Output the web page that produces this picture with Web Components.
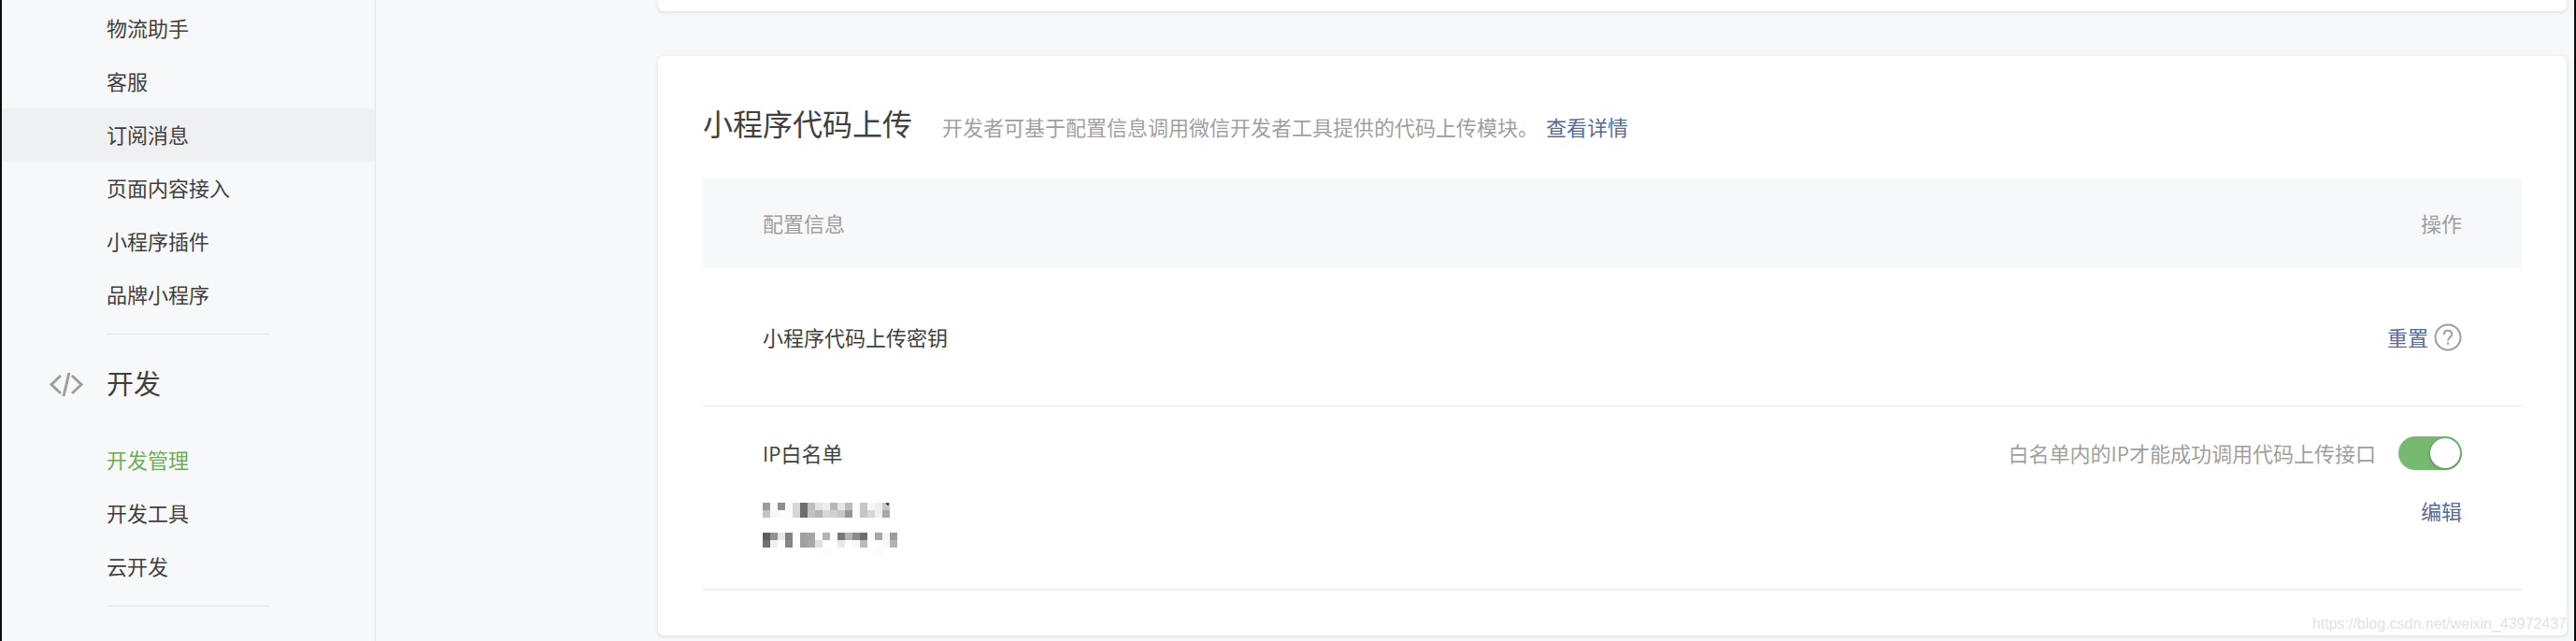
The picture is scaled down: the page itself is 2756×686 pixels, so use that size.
<!DOCTYPE html>
<html lang="zh-CN">
<head>
<meta charset="utf-8">
<meta name="viewport" content="width=device-width, initial-scale=1">
<title>开发管理</title>
<style>
  :root {
    --font: "Open Sans", "Noto Sans CJK SC", sans-serif;
    --bg: #f7f8fa;
    --text: #404040;
    --muted: #9f9f9f;
    --link: #576b95;
    --green: #6dad58;
    --line: #e4e5e7;
    --size: 22px;
  }

  body {
    margin: 0;
    background: var(--bg);
    color: var(--text);
    font-family: var(--font);
    font-size: var(--size);
    line-height: 36px;
  }
</style>
</head>
<body>

<console-shell>
  <side-nav slot="nav">
    <nav-group>
      <nav-item href="#logistics">物流助手</nav-item>
      <nav-item href="#service">客服</nav-item>
      <nav-item href="#subscribe" hovered>订阅消息</nav-item>
      <nav-item href="#content">页面内容接入</nav-item>
      <nav-item href="#plugin">小程序插件</nav-item>
      <nav-item href="#brand">品牌小程序</nav-item>
    </nav-group>
    <nav-group heading="开发">
      <nav-item href="#manage" current>开发管理</nav-item>
      <nav-item href="#tools">开发工具</nav-item>
      <nav-item href="#cloud">云开发</nav-item>
    </nav-group>
  </side-nav>

  <content-card tail></content-card>
  <content-card>
    <card-title slot="header">
      小程序代码上传
      <span slot="desc">开发者可基于配置信息调用微信开发者工具提供的代码上传模块。</span>
      <text-link slot="link" href="#detail">查看详情</text-link>
    </card-title>
    <upload-table></upload-table>
  </content-card>

  <water-mark slot="overlay">https://blog.csdn.net/weixin_43972437</water-mark>
</console-shell>

<script>
  const html = (markup) => {
    const template = document.createElement("template");
    template.innerHTML = markup;
    return template;
  };

  class BaseElement extends HTMLElement {
    constructor() {
      super();
      this.attachShadow({ mode: "open" });
      this.shadowRoot.append(this.constructor.template.content.cloneNode(true));
    }
  }

  class ConsoleShell extends BaseElement {
    static template = html(`
<style>
  :host {
    display: flex;
    box-sizing: border-box;
    min-height: 100vh;
    border: solid #0b0c0e;
    border-width: 0 2px;
  }

  main {
    flex: 1;
    min-width: 0;
    display: flex;
    flex-flow: column;
    gap: 48px;
    padding: 0 8px 6px 302px;
  }
</style>

<slot name="nav"></slot>
<main><slot></slot></main>
<slot name="overlay"></slot>
`);
  }

  class SideNav extends BaseElement {
    static template = html(`
<style>
  :host {
    display: block;
    flex: none;
    box-sizing: border-box;
    width: 400px;
    padding-top: 2px;
    border-right: 1px solid var(--line);
  }
</style>

<nav><slot></slot></nav>
`);
  }

  class NavGroup extends BaseElement {
    static template = html(`
<style>
  :host {
    display: block;
  }

  h2 {
    display: flex;
    align-items: center;
    height: 106px;
    margin: 0;
    padding-left: 50px;
    font-size: 29px;
    font-weight: 400;
  }

  h2[hidden] {
    display: none;
  }

  svg {
    width: 38px;
    height: 28px;
    margin-right: 24px;
    fill: none;
    stroke: var(--muted);
    stroke-width: 3;
  }

  hr {
    width: 175px;
    height: 1px;
    margin: 13px 0 0 112px;
    border: 0;
    background: var(--line);
  }
</style>

<h2 hidden>
  <svg viewBox="0 0 38 28" aria-hidden="true">
    <path d="M13 5 3 14.500l10 9.500M25 5l10 9.500L25 24M22 2l-6 25"/>
  </svg>
  <span></span>
</h2>
<slot></slot>
<hr>
`);

    connectedCallback() {
      const heading = this.getAttribute("heading");
      if (!heading) return;
      this.shadowRoot.querySelector("h2").hidden = false;
      this.shadowRoot.querySelector("h2 span").textContent = heading;
    }
  }

  class NavItem extends BaseElement {
    static template = html(`
<style>
  :host {
    display: block;
  }

  a {
    display: block;
    padding-left: 112px;
    line-height: 57px;
    color: inherit;
    text-decoration: none;
  }

  a:hover,
  :host([hovered]) a {
    background: #eff0f2;
  }

  :host([current]) a {
    color: var(--green);
  }
</style>

<a><slot></slot></a>
`);

    connectedCallback() {
      const a = this.shadowRoot.querySelector("a");
      a.href = this.getAttribute("href");
      if (this.hasAttribute("current")) a.setAttribute("aria-current", "page");
    }
  }

  class ContentCard extends BaseElement {
    static template = html(`
<style>
  :host {
    display: block;
    padding: 48px;
    background: #fff;
    border-radius: 6px;
    box-shadow: 0 1px 4px rgba(0, 0, 0, 0.12);
  }

  /* only the bottom edge of the previous card is in view */
  :host([tail]) {
    padding: 12px 48px 0;
    border-radius: 0 0 6px 6px;
  }
</style>

<slot name="header"></slot>
<slot></slot>
`);
  }

  class CardTitle extends BaseElement {
    static template = html(`
<style>
  :host {
    display: flex;
    align-items: baseline;
    margin-bottom: 33px;
  }

  h3 {
    margin: 0 32px 0 0;
    font-size: 32px;
    font-weight: 400;
    line-height: 50px;
  }

  p {
    margin: 0 8px 0 0;
    color: var(--muted);
  }
</style>

<h3><slot></slot></h3>
<p><slot name="desc"></slot></p>
<slot name="link"></slot>
`);
  }

  class TextLink extends BaseElement {
    static template = html(`
<style>
  :host {
    display: inline-block;
  }

  a {
    color: var(--link);
    text-decoration: none;
  }
</style>

<a><slot></slot></a>
`);

    connectedCallback() {
      this.shadowRoot.querySelector("a").href = this.getAttribute("href");
    }
  }

  class HelpButton extends BaseElement {
    static template = html(`
<style>
  :host {
    display: inline-flex;
  }

  button {
    display: flex;
    padding: 0;
    border: 0;
    background: none;
    cursor: pointer;
  }

  svg {
    width: 30px;
    height: 30px;
    fill: none;
    stroke: var(--muted);
    stroke-width: 2;
  }
</style>

<button type="button" aria-label="帮助">
  <svg viewBox="0 0 30 30" aria-hidden="true">
    <circle cx="15" cy="15" r="13.500"/>
    <path d="M10.800 12.200c0-2.700 1.700-4.400 4.200-4.400s4.200 1.600 4.200 3.900c0 3.200-4.200 3.500-4.200 7M15 20.500v2.300"/>
  </svg>
</button>
`);
  }

  class ToggleSwitch extends BaseElement {
    static template = html(`
<style>
  :host {
    display: flex;
    align-items: center;
    gap: 24px;
  }

  label {
    color: var(--muted);
  }

  input {
    appearance: none;
    box-sizing: border-box;
    width: 68px;
    height: 36px;
    margin: 0;
    padding: 2px;
    border-radius: 18px;
    background: #dfdfdf;
    cursor: pointer;
  }

  input::before {
    content: "";
    display: block;
    width: 32px;
    height: 32px;
    border-radius: 50%;
    background: #fff;
    box-shadow: 0 1px 4px rgba(0, 0, 0, 0.3);
  }

  input:checked {
    background: #78b972;
  }

  input:checked::before {
    margin-left: auto;
  }
</style>

<label for="toggle"><slot></slot></label>
<input id="toggle" type="checkbox" role="switch" checked>
`);
  }

  // addresses are hidden behind a grid of grey 8px cells
  const CELLS = [
    "9b fb 8f fb d8 6e c0 e3 ee b8 e6 bc fa c5 f6 ee c8",
    "c3 f6 fb fb d6 6e c3 b5 d6 d0 c6 96 f8 c5 d6 f0 a9",
    "",
    "",
    "5d 92 e8 80 fd a0 a4 fa b3 ff 78 b3 8c 6e ff a8 f6 9c",
    "70 f0 fd 85 fd a0 a8 e0 ff ff e8 ff f8 bb ff fd f8 b4",
    "ff ff ff ff ff ff ff ff fa ff ff ff ff ff ff fa",
  ];

  class MaskedAddress extends BaseElement {
    static template = html(`
<style>
  :host {
    display: block;
  }

  svg {
    display: block;
    width: 144px;
    height: 56px;
  }
</style>

<svg viewBox="0 0 144 56" shape-rendering="crispEdges" aria-hidden="true"></svg>
`);

    connectedCallback() {
      const rects = CELLS.flatMap((row, y) =>
        row.split(" ").filter(Boolean).map((v, x) =>
          `<rect x="${x * 8}" y="${y * 8}" width="8" height="8" fill="#${v}${v}${v}"/>`
        )
      );
      rects.push(`<path d="M131 2h1v-2h3v3h-2v-1z" fill="#444"/>`);
      this.shadowRoot.querySelector("svg").innerHTML = rects.join("");
    }
  }

  class UploadTable extends BaseElement {
    static template = html(`
<style>
  :host {
    display: block;
  }

  table {
    width: 100%;
    border-spacing: 0;
  }

  th,
  td {
    box-sizing: border-box;
    padding: 0 64px;
    text-align: left;
  }

  th {
    height: 96px;
    background: var(--bg);
    color: var(--muted);
    font-weight: 400;
  }

  td {
    height: 148px;
    border-bottom: 1px solid var(--line);
  }

  .whitelist td {
    padding-top: 32px;
    padding-bottom: 36px;
    border-bottom-width: 2px;
    border-bottom-color: #ededee;
    vertical-align: top;
  }

  th:last-child,
  td:last-child {
    text-align: right;
  }

  .actions {
    display: flex;
    justify-content: flex-end;
    align-items: center;
    gap: 6px;
  }

  .names,
  .stack {
    display: flex;
    flex-flow: column;
    gap: 35px;
  }

  .stack {
    align-items: flex-end;
    gap: 26px;
  }
</style>

<table>
  <thead>
    <tr><th scope="col">配置信息</th><th scope="col">操作</th></tr>
  </thead>
  <tbody>
    <tr>
      <td>小程序代码上传密钥</td>
      <td>
        <div class="actions">
          <text-link href="#reset">重置</text-link>
          <help-button></help-button>
        </div>
      </td>
    </tr>
    <tr class="whitelist">
      <td>
        <div class="names">
          <span>IP白名单</span>
          <masked-address></masked-address>
        </div>
      </td>
      <td>
        <div class="stack">
          <toggle-switch>白名单内的IP才能成功调用代码上传接口</toggle-switch>
          <text-link href="#edit">编辑</text-link>
        </div>
      </td>
    </tr>
  </tbody>
</table>
`);
  }

  class WaterMark extends BaseElement {
    static template = html(`
<style>
  :host {
    position: absolute;
    right: 10px;
    bottom: 6px;
    color: #e2e2e2;
    font-family: "Liberation Sans", Arial, sans-serif;
    font-size: 16px;
    line-height: 24px;
    pointer-events: none;
  }
</style>

<slot></slot>
`);
  }

  customElements.define("console-shell", ConsoleShell);
  customElements.define("side-nav", SideNav);
  customElements.define("nav-group", NavGroup);
  customElements.define("nav-item", NavItem);
  customElements.define("content-card", ContentCard);
  customElements.define("card-title", CardTitle);
  customElements.define("text-link", TextLink);
  customElements.define("help-button", HelpButton);
  customElements.define("toggle-switch", ToggleSwitch);
  customElements.define("masked-address", MaskedAddress);
  customElements.define("upload-table", UploadTable);
  customElements.define("water-mark", WaterMark);
</script>
</body>
</html>
